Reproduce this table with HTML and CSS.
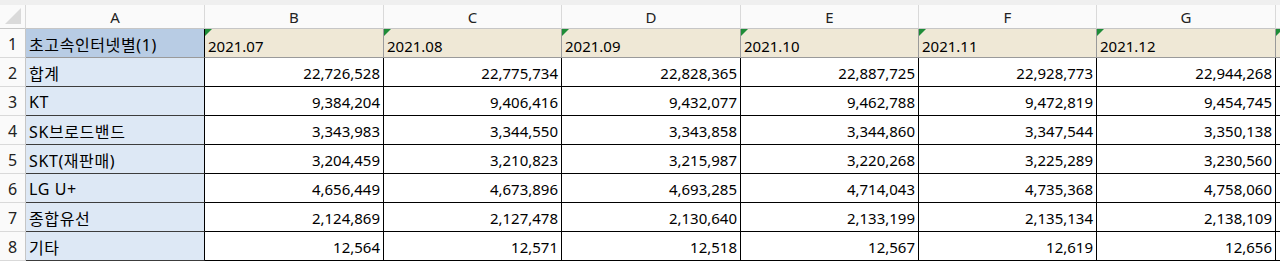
FILE: index.html
```html
<!DOCTYPE html>
<html lang="ko">

<head>
    <meta charset="utf-8">
    <title>초고속인터넷별</title>
    <link rel="stylesheet" href="styles.css">
</head>

<body>
    <div class="topbar"></div>

    <div class="sheet">
        <div class="corner"><span class="tri"></span></div>
        <div class="colhead">A</div>
        <div class="colhead">B</div>
        <div class="colhead">C</div>
        <div class="colhead">D</div>
        <div class="colhead">E</div>
        <div class="colhead">F</div>
        <div class="colhead">G</div>
        <div class="colhead edge"></div>

        <div class="rowhead">1</div>
        <div class="cell label title">초고속인터넷별(1)</div>
        <div class="cell month"><span class="flag"></span>2021.07</div>
        <div class="cell month"><span class="flag"></span>2021.08</div>
        <div class="cell month"><span class="flag"></span>2021.09</div>
        <div class="cell month"><span class="flag"></span>2021.10</div>
        <div class="cell month"><span class="flag"></span>2021.11</div>
        <div class="cell month"><span class="flag"></span>2021.12</div>
        <div class="cell month edge"><span class="flag"></span></div>

        <div class="rowhead">2</div>
        <div class="cell label">합계</div>
        <div class="cell num">22,726,528</div>
        <div class="cell num">22,775,734</div>
        <div class="cell num">22,828,365</div>
        <div class="cell num">22,887,725</div>
        <div class="cell num">22,928,773</div>
        <div class="cell num">22,944,268</div>
        <div class="cell edge"></div>

        <div class="rowhead">3</div>
        <div class="cell label">KT</div>
        <div class="cell num">9,384,204</div>
        <div class="cell num">9,406,416</div>
        <div class="cell num">9,432,077</div>
        <div class="cell num">9,462,788</div>
        <div class="cell num">9,472,819</div>
        <div class="cell num">9,454,745</div>
        <div class="cell edge"></div>

        <div class="rowhead">4</div>
        <div class="cell label">SK브로드밴드</div>
        <div class="cell num">3,343,983</div>
        <div class="cell num">3,344,550</div>
        <div class="cell num">3,343,858</div>
        <div class="cell num">3,344,860</div>
        <div class="cell num">3,347,544</div>
        <div class="cell num">3,350,138</div>
        <div class="cell edge"></div>

        <div class="rowhead">5</div>
        <div class="cell label">SKT(재판매)</div>
        <div class="cell num">3,204,459</div>
        <div class="cell num">3,210,823</div>
        <div class="cell num">3,215,987</div>
        <div class="cell num">3,220,268</div>
        <div class="cell num">3,225,289</div>
        <div class="cell num">3,230,560</div>
        <div class="cell edge"></div>

        <div class="rowhead">6</div>
        <div class="cell label">LG U+</div>
        <div class="cell num">4,656,449</div>
        <div class="cell num">4,673,896</div>
        <div class="cell num">4,693,285</div>
        <div class="cell num">4,714,043</div>
        <div class="cell num">4,735,368</div>
        <div class="cell num">4,758,060</div>
        <div class="cell edge"></div>

        <div class="rowhead">7</div>
        <div class="cell label">종합유선</div>
        <div class="cell num">2,124,869</div>
        <div class="cell num">2,127,478</div>
        <div class="cell num">2,130,640</div>
        <div class="cell num">2,133,199</div>
        <div class="cell num">2,135,134</div>
        <div class="cell num">2,138,109</div>
        <div class="cell edge"></div>

        <div class="rowhead">8</div>
        <div class="cell label">기타</div>
        <div class="cell num">12,564</div>
        <div class="cell num">12,571</div>
        <div class="cell num">12,518</div>
        <div class="cell num">12,567</div>
        <div class="cell num">12,619</div>
        <div class="cell num">12,656</div>
        <div class="cell edge"></div>
    </div>
</body>

</html>
```

FILE: styles.css
```css
* {
    box-sizing: border-box;
}

body {
    margin: 0;
    background-color: #fff;
    font-family: "Noto Sans", "Noto Sans CJK KR", sans-serif;
    font-size: 15px;
    color: #000;
    overflow: hidden;
}

.topbar {
    height: 5px;
    background-color: #efefef;
}

.sheet {
    display: grid;
    grid-template-columns: 26px 179px 179px 178px 179px 178px 178px 179px 4px;
    grid-template-rows: 24px repeat(8, 29px);
}

.corner {
    position: relative;
    background-color: #fafafa;
    border-right: 1px solid #d9d9d9;
    border-bottom: 1px solid #c6c6c6;
}

.corner .tri {
    position: absolute;
    right: 4px;
    bottom: 4px;
    width: 0;
    height: 0;
    border-left: 16px solid transparent;
    border-bottom: 16px solid #dadada;
}

.colhead {
    background-color: #fafafa;
    border-right: 1px solid #d9d9d9;
    border-bottom: 1px solid #c6c6c6;
    display: flex;
    align-items: center;
    justify-content: center;
    color: #222;
}

.rowhead {
    background-color: #fafafa;
    border-right: 1px solid #c6c6c6;
    border-bottom: 1px solid #d9d9d9;
    display: flex;
    align-items: center;
    justify-content: center;
    color: #222;
    font-size: 16px;
    padding-top: 1px;
}

.cell {
    position: relative;
    display: flex;
    align-items: center;
    padding: 1px 3px 0 3px;
    border-right: 1px solid #000;
    border-bottom: 1px solid #000;
    white-space: nowrap;
    overflow: hidden;
}

.label {
    background-color: #dde8f5;
    border-bottom-color: #3c3c3c;
    font-size: 16px;
    letter-spacing: 0.6px;
}

.label.title {
    background-color: #b8cce4;
    border-bottom-color: #9a9a9a;
}

.month {
    background-color: #efe8d6;
    border-right-color: #9a9a9a;
    border-bottom-color: #9a9a9a;
    padding-top: 6px;
}

.num {
    justify-content: flex-end;
}

.edge {
    border-right: none;
}

.flag {
    position: absolute;
    left: 0;
    top: 0;
    width: 0;
    height: 0;
    border-top: 7px solid #1e8c38;
    border-right: 7px solid transparent;
}
```
